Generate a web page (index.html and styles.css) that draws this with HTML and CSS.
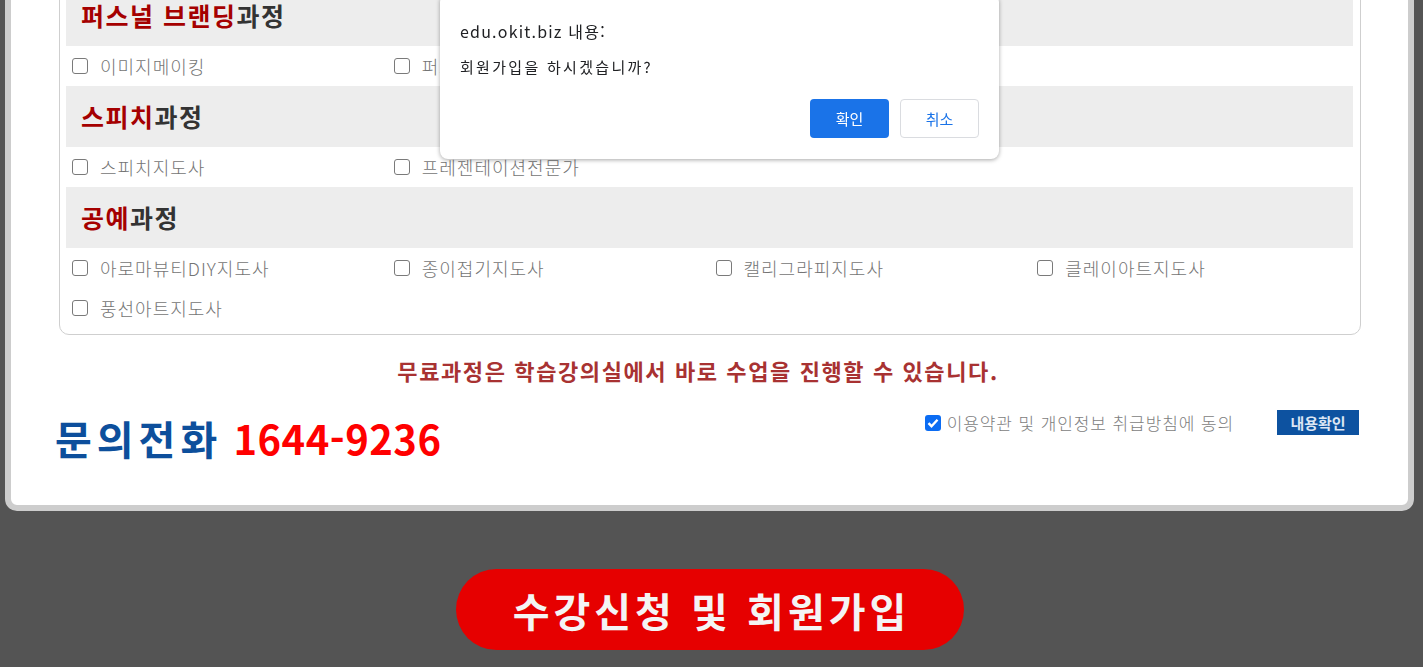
FILE: index.html
```html
<!DOCTYPE html>
<html lang="ko">
<head>
  <meta charset="UTF-8">
  <meta name="viewport" content="width=device-width, initial-scale=1.0">
  <title>수강신청 및 회원가입</title>
  <link rel="stylesheet" href="styles.css">
</head>
<body>

  <div class="page">
    <div class="panel">

      <!-- course list -->
      <div class="course-box">
        <div class="course-head"><span class="accent">퍼스널 브랜딩</span>과정</div>
        <div class="course-items">
          <label class="course-item"><input type="checkbox">이미지메이킹</label>
          <label class="course-item"><input type="checkbox">퍼스널브랜딩전문가</label>
        </div>

        <div class="course-head"><span class="accent">스피치</span>과정</div>
        <div class="course-items">
          <label class="course-item"><input type="checkbox">스피치지도사</label>
          <label class="course-item"><input type="checkbox">프레젠테이션전문가</label>
        </div>

        <div class="course-head"><span class="accent">공예</span>과정</div>
        <div class="course-items">
          <label class="course-item"><input type="checkbox">아로마뷰티DIY지도사</label>
          <label class="course-item"><input type="checkbox">종이접기지도사</label>
          <label class="course-item"><input type="checkbox">캘리그라피지도사</label>
          <label class="course-item"><input type="checkbox">클레이아트지도사</label>
          <label class="course-item"><input type="checkbox">풍선아트지도사</label>
        </div>
      </div>

      <p class="notice">무료과정은 학습강의실에서 바로 수업을 진행할 수 있습니다.</p>

      <div class="contact-row">
        <div class="phone">
          <span class="phone-label">문의전화</span> <span class="phone-num">1644-9236</span>
        </div>
        <div class="agree">
          <label class="agree-label"><input type="checkbox" checked>이용약관 및 개인정보 취급방침에 동의</label>
          <button class="btn-terms" type="button">내용확인</button>
        </div>
      </div>
    </div>

    <div class="submit-wrap">
      <button class="btn-submit" type="button">수강신청 및 회원가입</button>
    </div>
  </div>

  <!-- confirm dialog -->
  <div class="dialog">
    <div class="dialog-title">edu.okit.biz 내용:</div>
    <div class="dialog-msg">회원가입을 하시겠습니까?</div>
    <div class="dialog-btns">
      <button class="dlg-ok" type="button">확인</button>
      <button class="dlg-cancel" type="button">취소</button>
    </div>
  </div>

</body>
</html>
```

FILE: styles.css
```css
body {
  margin: 0;
  background-color: #545454;
  font-family: "Noto Sans CJK KR", "Noto Sans", sans-serif;
  overflow: hidden;
}
.page {
  width: 1409px;
  margin-left: 5px;
}
.panel {
  margin-top: -59px;
  background-color: #fff;
  border: 6px solid #cdcdcd;
  border-radius: 12px;
  padding: 30px 47px 37px 48px;
}
.course-box {
  border: 1px solid #cfcfcf;
  border-radius: 10px;
  padding: 7px 7px 6px 6px;
}
.course-head {
  height: 61px;
  line-height: 61px;
  background-color: #ededed;
  padding-left: 15px;
  font-size: 25px;
  font-weight: bold;
  letter-spacing: 1.5px;
  color: #333;
}
.course-head .accent {
  color: #a50000;
}
.course-items {
  display: grid;
  grid-template-columns: repeat(4, 1fr);
}
.course-item {
  display: flex;
  align-items: center;
  height: 40px;
  padding-left: 6px;
  font-size: 18px;
  font-weight: 300;
  letter-spacing: 1px;
  color: #747474;
  white-space: nowrap;
}
input[type="checkbox"] {
  appearance: none;
  box-sizing: border-box;
  width: 16px;
  height: 16px;
  border: 1.5px solid #7a7a7a;
  border-radius: 3px;
  background-color: #fff;
  flex-shrink: 0;
}
input[type="checkbox"]:checked {
  border: none;
  background-color: #0b6cf3;
  background-image: url("data:image/svg+xml,%3Csvg xmlns='http://www.w3.org/2000/svg' viewBox='0 0 16 16'%3E%3Cpath d='M3.5 8.2l3 3 6-6.4' fill='none' stroke='white' stroke-width='2.4'/%3E%3C/svg%3E");
}
.course-item input {
  margin: 0 12px 0 0;
}
.notice {
  margin: 17px 0 0;
  padding-right: 24px;
  line-height: 36px;
  text-align: center;
  font-size: 22px;
  font-weight: bold;
  letter-spacing: 1.6px;
  color: #a83232;
}
.contact-row {
  display: flex;
  justify-content: space-between;
  align-items: flex-start;
  margin-top: 20px;
  margin-left: -4px;
  margin-right: 2px;
}
.phone {
  height: 60px;
  line-height: 60px;
  font-size: 40px;
  font-weight: bold;
  white-space: nowrap;
}
.phone-label {
  color: #0d4f9c;
  letter-spacing: 5px;
}
.phone-num {
  color: #ff0000;
  letter-spacing: 0.5px;
}
.agree {
  display: flex;
  align-items: center;
  height: 25px;
  margin-top: 2px;
}
.agree-label {
  display: flex;
  align-items: center;
  font-size: 17px;
  font-weight: 300;
  letter-spacing: 0.9px;
  color: #7d7d7d;
}
.agree-label input {
  margin: 0 6px 0 0;
}
.btn-terms {
  margin-left: 43px;
  width: 82px;
  height: 25px;
  padding: 0;
  border: none;
  background-color: #0d52a0;
  color: #dce6f4;
  font-family: inherit;
  font-size: 15px;
  font-weight: bold;
}
.submit-wrap {
  display: flex;
  justify-content: center;
  padding-top: 58px;
}
.btn-submit {
  width: 508px;
  height: 81px;
  padding: 0 0 0 4px;
  border: none;
  border-radius: 41px;
  background-color: #e60000;
  color: #f4f4f4;
  font-family: inherit;
  font-size: 40px;
  font-weight: bold;
  letter-spacing: 4px;
}

/* browser-style confirm */
.dialog {
  position: fixed;
  top: -6px;
  left: 440px;
  width: 559px;
  box-sizing: border-box;
  padding: 25px 20px 21px;
  background-color: #fff;
  border-radius: 8px;
  box-shadow: 0 1px 4px rgba(0, 0, 0, 0.35);
}
.dialog-title {
  font-size: 16px;
  line-height: 24px;
  letter-spacing: 1.2px;
  color: #202124;
}
.dialog-msg {
  margin-top: 14px;
  font-size: 15px;
  line-height: 20px;
  letter-spacing: 2.3px;
  color: #202124;
}
.dialog-btns {
  display: flex;
  justify-content: flex-end;
  gap: 11px;
  margin-top: 22px;
}
.dialog-btns button {
  width: 79px;
  height: 39px;
  border-radius: 4px;
  font-family: inherit;
  font-size: 15px;
}
.dlg-ok {
  border: none;
  background-color: #1a73e8;
  color: #fff;
}
.dlg-cancel {
  border: 1px solid #dadce0;
  background-color: #fff;
  color: #1a73e8;
}
```
